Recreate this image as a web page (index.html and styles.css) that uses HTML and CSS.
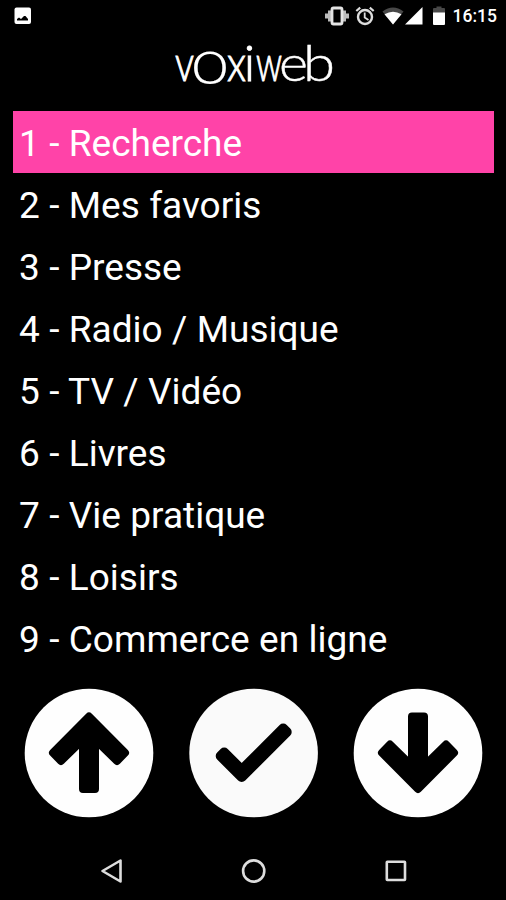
FILE: index.html
```html
<!DOCTYPE html>
<html lang="fr">
<head>
    <meta charset="UTF-8">
    <meta name="viewport" content="width=device-width, initial-scale=1.0">
    <title>Voxiweb</title>
    <link rel="stylesheet" href="styles.css">
</head>
<body>
    <div class="status-bar">
        <svg class="photo" width="18" height="18" viewBox="0 0 18 18">
            <rect x="0.5" y="0.5" width="16.5" height="16.5" rx="2" fill="#fff"/>
            <path d="M3 13.5 V12 L5 10.5 L7 12 L10 9 L11.5 9 L14 12 V13.5 Z" fill="#000"/>
        </svg>
        <div class="status-icons">
            <svg class="vibrate" width="24" height="20" viewBox="0 0 24 20">
                <path d="M1.5 7.5 V12.5 M4.5 4.5 V15.5 M22.5 7.5 V12.5 M19.5 4.5 V15.5" stroke="#bbb" stroke-width="3"/>
                <rect x="7" y="2" width="10" height="16" rx="1.5" fill="none" stroke="#e4e4e4" stroke-width="2.8"/>
            </svg>
            <svg class="alarm" width="20" height="20" viewBox="0 0 20 20">
                <circle cx="10" cy="11" r="7" fill="none" stroke="#ddd" stroke-width="2.4"/>
                <path d="M1.3 5 L5.2 1.7 M18.7 5 L14.8 1.7" stroke="#ddd" stroke-width="2.2"/>
                <path d="M9.7 6.5 V11.5 L13.5 14" fill="none" stroke="#ddd" stroke-width="1.8"/>
            </svg>
            <svg class="wifi" width="22" height="18" viewBox="0 0 22 18">
                <path d="M0.5 4.5 Q11 -3.5 21.5 4.5 L11 17.5 Z" fill="#484848"/>
                <path d="M2.5 7.2 Q11 2.2 19.5 7.2 L11 17.5 Z" fill="#fff"/>
            </svg>
            <svg class="signal" width="18" height="18" viewBox="0 0 18 18">
                <path d="M17.5 0 V17.5 H0 Z" fill="#fff"/>
            </svg>
            <svg class="battery" width="12" height="20" viewBox="0 0 12 20">
                <path d="M0 7 V3 Q0 2 1 2 H3.5 V0.5 H8.5 V2 H11 Q12 2 12 3 V7 Z" fill="#484848"/>
                <path d="M0 6.5 H12 V18 Q12 19 11 19 H1 Q0 19 0 18 Z" fill="#fff"/>
            </svg>
            <span class="time">16:15</span>
        </div>
    </div>

    <div class="header">
        <svg class="logo" width="160" height="50" viewBox="0 0 160 50">
            <text y="42.5"><tspan x="2" textLength="19" lengthAdjust="spacingAndGlyphs">v</tspan><tspan class="big-o" x="17.5" y="46" textLength="39" lengthAdjust="spacingAndGlyphs">o</tspan><tspan x="54" y="42.5" textLength="19" lengthAdjust="spacingAndGlyphs">x</tspan><tspan x="71">i</tspan><tspan x="83" textLength="26" lengthAdjust="spacingAndGlyphs">w</tspan><tspan class="round" x="106" textLength="29" lengthAdjust="spacingAndGlyphs">e</tspan><tspan class="round" x="130" textLength="32" lengthAdjust="spacingAndGlyphs">b</tspan></text>
        </svg>
    </div>

    <ul class="menu">
        <li class="menu-item active">1 - Recherche</li>
        <li class="menu-item">2 - Mes favoris</li>
        <li class="menu-item">3 - Presse</li>
        <li class="menu-item">4 - Radio / Musique</li>
        <li class="menu-item">5 - TV / Vidéo</li>
        <li class="menu-item">6 - Livres</li>
        <li class="menu-item">7 - Vie pratique</li>
        <li class="menu-item">8 - Loisirs</li>
        <li class="menu-item">9 - Commerce en ligne</li>
    </ul>

    <div class="controls">
        <button class="control up">
            <svg width="130" height="130" viewBox="0 0 130 130">
                <circle cx="65" cy="65" r="64.3" fill="#fefefe"/>
                <path class="arrow" d="M65 28.5 L101 64.8 L93 73 L71 51.5 V101 H59 V51.5 L37 73 L29 64.8 Z"/>
            </svg>
        </button>
        <button class="control ok">
            <svg width="130" height="130" viewBox="0 0 130 130">
                <circle cx="64.6" cy="65" r="64.3" fill="#fafafa"/>
                <path class="check" d="M31.7 68 L35.2 64.5 L52.7 82 L94.2 40.5 L97.7 44 L52.7 89 Z"/>
            </svg>
        </button>
        <button class="control down">
            <svg width="130" height="130" viewBox="0 0 130 130">
                <circle cx="65" cy="65" r="64.3" fill="#fefefe"/>
                <path class="arrow" d="M65 101 L29 64.7 L37 56.5 L59 78 V28.5 H71 V78 L93 56.5 L101 64.7 Z"/>
            </svg>
        </button>
    </div>

    <div class="nav-bar">
        <svg width="26" height="26" viewBox="0 0 26 26">
            <path d="M22.5 2.5 V23.5 L4.5 13 Z"/>
        </svg>
        <svg width="26" height="26" viewBox="0 0 26 26">
            <circle cx="12.7" cy="13" r="10.6"/>
        </svg>
        <svg width="26" height="26" viewBox="0 0 26 26">
            <rect x="3.8" y="3.8" width="18.2" height="18.2" rx="0.5"/>
        </svg>
    </div>
</body>
</html>
```
FILE: styles.css
```css
* {
    box-sizing: border-box;
}
body {
    margin: 0;
    height: 900px;
    background-color: #000;
    color: #fff;
    font-family: Roboto, "Liberation Sans", sans-serif;
    overflow: hidden;
}
svg {
    display: block;
}
.status-bar {
    display: flex;
    justify-content: space-between;
    align-items: center;
    height: 32px;
    padding: 0 9px 0 14px;
}
.status-icons {
    display: flex;
    align-items: center;
}
.alarm {
    margin-left: 6px;
}
.wifi {
    margin-left: 7px;
}
.signal {
    margin-left: 1px;
}
.battery {
    margin-left: 10px;
}
.time {
    margin-left: 8px;
    font-size: 17.5px;
    font-weight: 500;
}
.header {
    display: flex;
    justify-content: center;
    height: 79px;
    padding-top: 6px;
}
.logo {
    overflow: visible;
    fill: #fff;
    stroke: #fff;
    stroke-width: 1;
    font-family: Lato, sans-serif;
    font-weight: 300;
    font-size: 49px;
}
.big-o {
    font-size: 65px;
    stroke-width: 0.1;
}
.round {
    stroke-width: 0.4;
}
.menu {
    list-style: none;
    margin: 0 12px 0 13px;
    padding: 0;
}
.menu-item {
    height: 62px;
    padding-left: 6px;
    font-size: 37px;
    line-height: 66px;
    word-spacing: 0.2px;
    white-space: nowrap;
}
.active {
    background-color: #ff43a8;
}
.controls {
    display: flex;
    justify-content: space-between;
    padding: 18.5px 23px 0 24px;
}
.control {
    background-color: transparent;
    border: none;
    padding: 0;
    cursor: pointer;
}
.arrow, .check {
    fill: #000;
    stroke: #000;
    stroke-width: 8;
    stroke-linejoin: round;
}
.check {
    stroke-width: 10;
}
.nav-bar {
    display: flex;
    justify-content: space-between;
    padding: 40px 97px 0 98px;
}
.nav-bar svg {
    fill: none;
    stroke: #ddd;
    stroke-width: 2.6;
    stroke-linejoin: round;
}
```
